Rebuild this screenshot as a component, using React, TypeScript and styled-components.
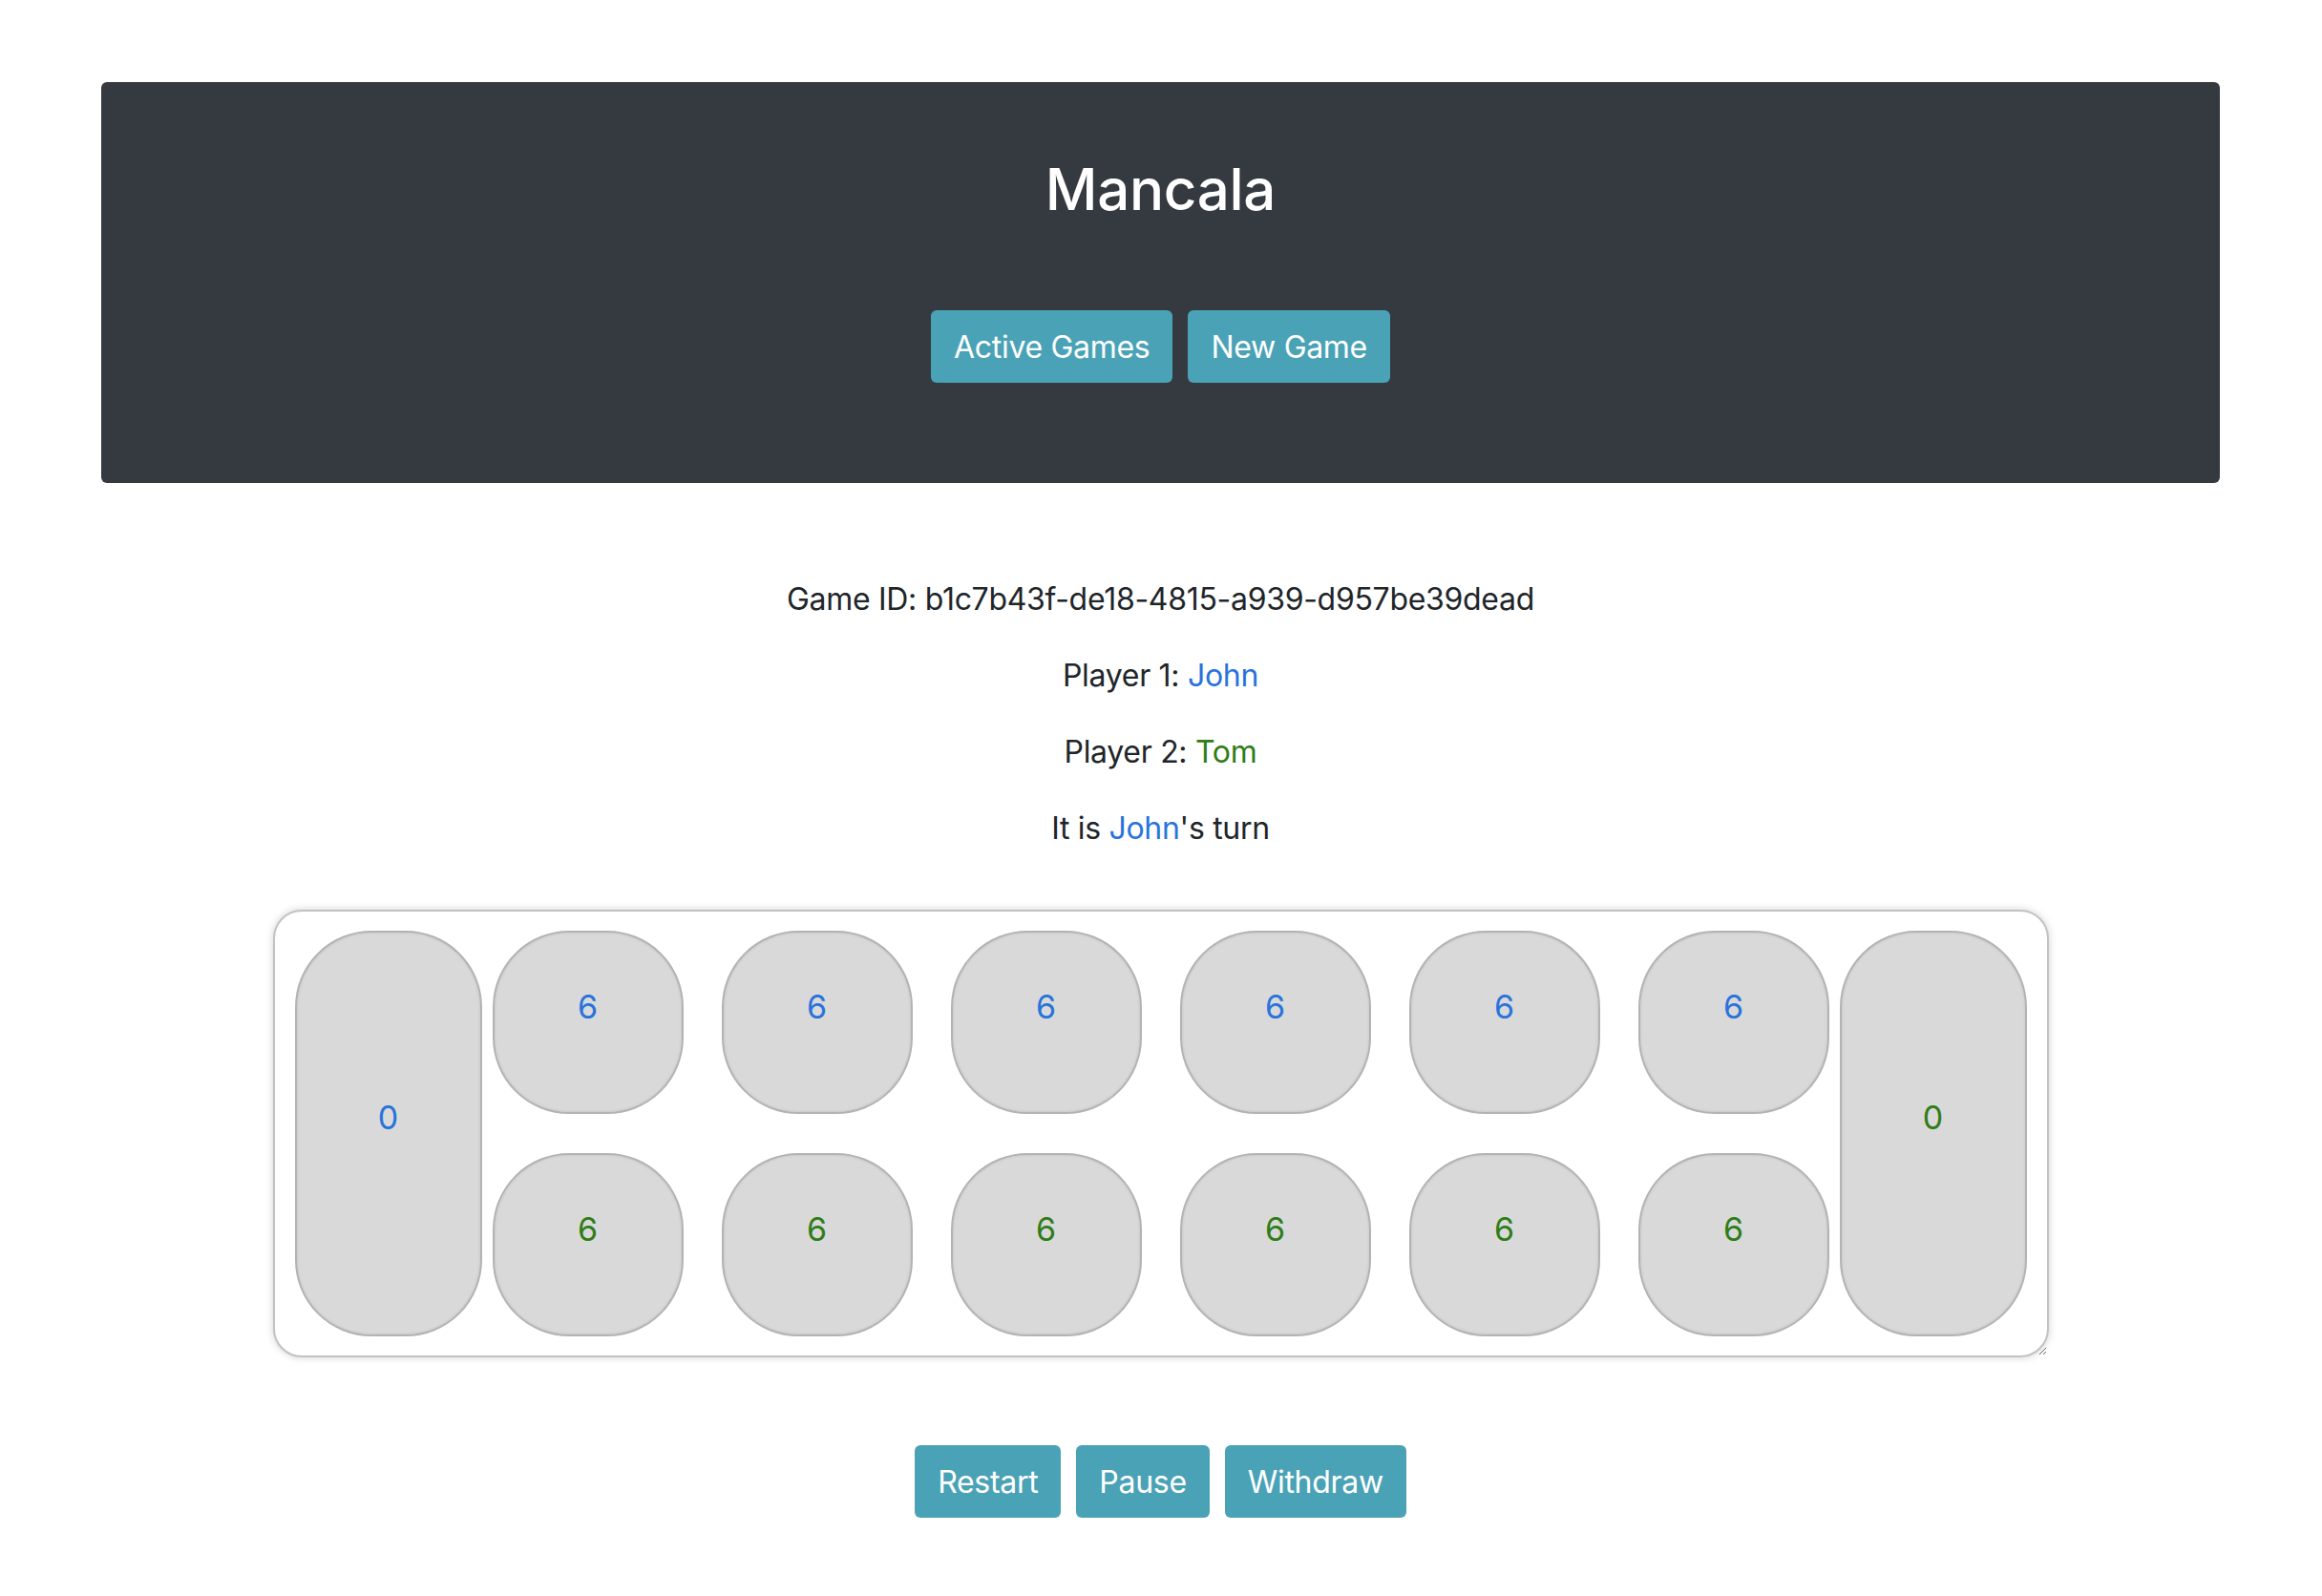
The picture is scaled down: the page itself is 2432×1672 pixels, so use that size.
import styled, { createGlobalStyle } from "styled-components";

const DARK = "#343a40";
const TEAL = "#4aa2b6";
const TEXT = "#212529";
const BLUE = "#2873dc";
const GREEN = "#2e7d17";

const GlobalStyle = createGlobalStyle`
  body {
    margin: 0;
    background: #ffffff;
    font-family: Inter, "Liberation Sans", sans-serif;
    color: ${TEXT};
  }
`;

type Side = "one" | "two";

const topPits = [6, 6, 6, 6, 6, 6];
const bottomPits = [6, 6, 6, 6, 6, 6];

export default function App() {
  return (
    <Page>
      <GlobalStyle />
      <Header>
        <Title>Mancala</Title>
        <ButtonRow>
          <Button>Active Games</Button>
          <Button>New Game</Button>
        </ButtonRow>
      </Header>

      <Info>
        <Line>Game ID: b1c7b43f-de18-4815-a939-d957be39dead</Line>
        <Line>
          Player 1: <Name side="one">John</Name>
        </Line>
        <Line>
          Player 2: <Name side="two">Tom</Name>
        </Line>
        <Line>
          It is <Name side="one">John</Name>'s turn
        </Line>
      </Info>

      <Board>
        <Store side="one">0</Store>
        <Pits>
          {topPits.map((n, i) => (
            <Pit key={`t${i}`} side="one">
              {n}
            </Pit>
          ))}
          {bottomPits.map((n, i) => (
            <Pit key={`b${i}`} side="two">
              {n}
            </Pit>
          ))}
        </Pits>
        <Store side="two">0</Store>
      </Board>

      <ButtonRow>
        <Button>Restart</Button>
        <Button>Pause</Button>
        <Button>Withdraw</Button>
      </ButtonRow>
    </Page>
  );
}

const Page = styled.div`
  display: flex;
  flex-direction: column;
  align-items: center;
  padding: 86px 107px 60px 106px;
`;

const Header = styled.header`
  align-self: stretch;
  display: flex;
  flex-direction: column;
  align-items: center;
  padding: 74px 0 105px;
  background: ${DARK};
  border-radius: 6px;
`;

const Title = styled.h1`
  margin: 0 0 88px;
  font-size: 60px;
  font-weight: 500;
  line-height: 77px;
  letter-spacing: -0.3px;
  color: #ffffff;
`;

const ButtonRow = styled.div`
  display: flex;
  gap: 16px;
`;

const Button = styled.button`
  height: 76px;
  padding: 0 24px;
  font-family: inherit;
  font-size: 32px;
  font-weight: 400;
  letter-spacing: -0.3px;
  color: #ffffff;
  background: ${TEAL};
  border: none;
  border-radius: 6px;
`;

const Info = styled.div`
  display: flex;
  flex-direction: column;
  align-items: center;
  gap: 32px;
  margin: 98px 0 61px;
`;

const Line = styled.p`
  margin: 0;
  font-size: 32px;
  line-height: 48px;
  letter-spacing: -0.3px;
`;

const Name = styled.span<{ side: Side }>`
  color: ${(p) => (p.side === "one" ? BLUE : GREEN)};
`;

const Board = styled.div`
  display: flex;
  gap: 11px;
  padding: 20px 21px;
  margin-bottom: 92px;
  background: #ffffff;
  border: 2px solid #c2c2c2;
  border-radius: 30px;
  box-shadow: 0 0 8px rgba(0, 0, 0, 0.18);
  resize: both;
  overflow: hidden;
`;

const Cup = styled.div<{ side: Side }>`
  display: flex;
  align-items: center;
  justify-content: center;
  box-sizing: border-box;
  padding-bottom: 34px;
  font-size: 34px;
  color: ${(p) => (p.side === "one" ? BLUE : GREEN)};
  background: #d9d9d9;
  border: 2px solid #b3b3b3;
  border-radius: 80px;
  box-shadow: inset 0 0 3px rgba(0, 0, 0, 0.12);
`;

const Store = styled(Cup)`
  width: 196px;
  height: 425px;
`;

const Pits = styled.div`
  display: grid;
  grid-template-columns: repeat(6, 200px);
  grid-template-rows: 192px 192px;
  column-gap: 40px;
  row-gap: 41px;
`;

const Pit = styled(Cup)``;
